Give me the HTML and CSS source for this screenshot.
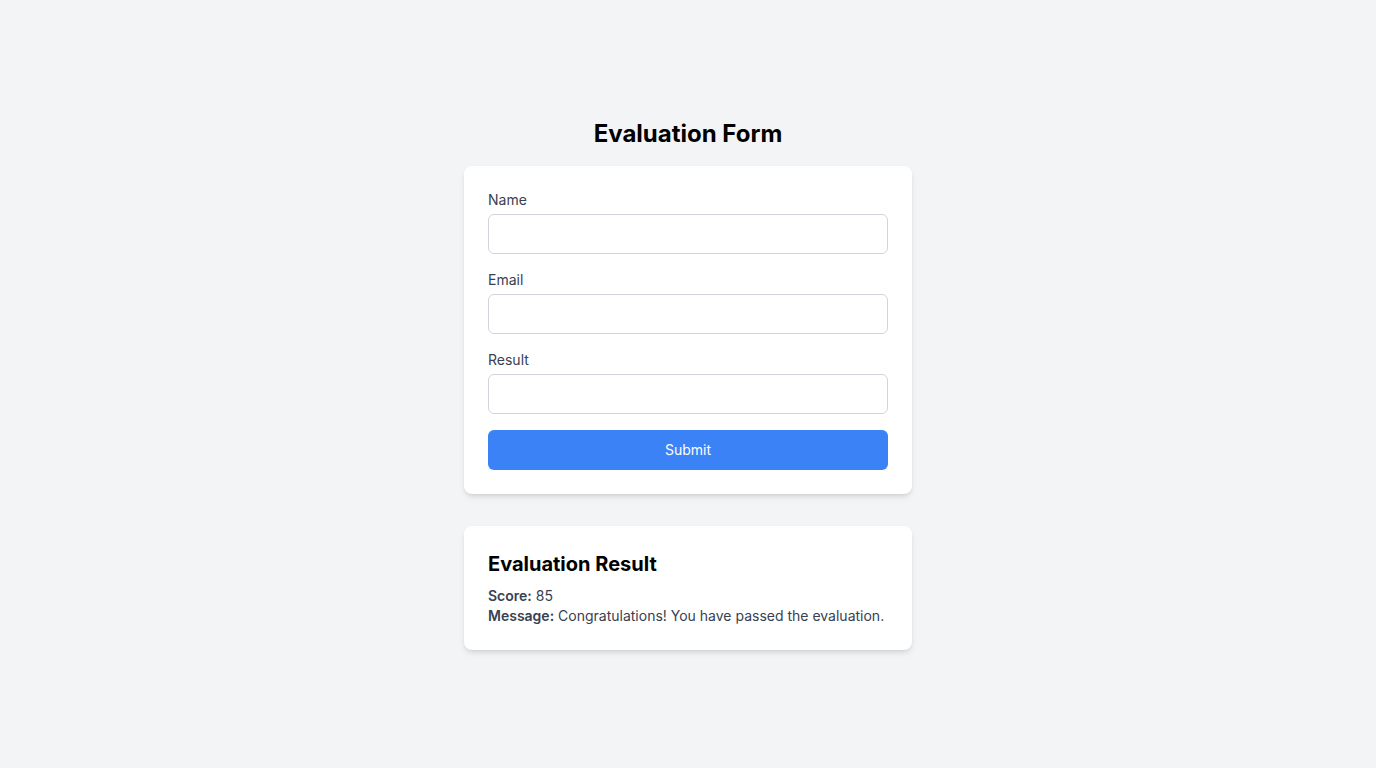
FILE: index.html
```html
<!DOCTYPE html>
<html lang="en">
<head>
<meta charset="utf-8">
<title>Evaluation Form</title>
<link rel="stylesheet" href="styles.css">
</head>
<body>
<main class="page">
  <div class="wrap">
    <h1 class="title">Evaluation Form</h1>
    <form class="card">
      <div class="field">
        <label class="label" for="name">Name</label>
        <input class="input" id="name" type="text">
      </div>
      <div class="field">
        <label class="label" for="email">Email</label>
        <input class="input" id="email" type="email">
      </div>
      <div class="field">
        <label class="label" for="result">Result</label>
        <input class="input" id="result" type="text">
      </div>
      <button class="btn" type="button">Submit</button>
    </form>
    <section class="card result">
      <h2 class="result-title">Evaluation Result</h2>
      <p class="line"><strong>Score:</strong> 85</p>
      <p class="line"><strong>Message:</strong> Congratulations! You have passed the evaluation.</p>
    </section>
  </div>
</main>
</body>
</html>
```
FILE: styles.css
```css
* { box-sizing: border-box; }
html, body { margin: 0; padding: 0; }
body {
  background: #f3f4f6;
  font-family: Inter, "Noto Sans", sans-serif;
  color: #374151;
}
.page {
  min-height: 100vh;
  display: flex;
  align-items: center;
  justify-content: center;
}
.wrap { width: 448px; }
.title {
  margin: 0 0 16px;
  font-size: 24px;
  line-height: 32px;
  font-weight: 700;
  text-align: center;
  color: #000;
}
.card {
  background: #fff;
  border-radius: 8px;
  padding: 24px;
  box-shadow: 0 4px 6px -1px rgba(0,0,0,0.1), 0 2px 4px -2px rgba(0,0,0,0.1);
}
.field { margin-bottom: 16px; }
.label {
  display: block;
  font-size: 14px;
  line-height: 20px;
  font-weight: 400;
  color: #374151;
  margin-bottom: 4px;
}
.input {
  display: block;
  width: 100%;
  height: 40px;
  border: 1px solid #d1d5db;
  border-radius: 6px;
  padding: 8px 12px;
  font: inherit;
  font-size: 14px;
  background: #fff;
  outline: none;
}
.btn {
  display: block;
  width: 100%;
  height: 40px;
  padding: 0;
  border: 0;
  border-radius: 6px;
  background: #3b82f6;
  color: #fff;
  font-family: inherit;
  font-size: 14px;
  line-height: 20px;
  font-weight: 400;
  cursor: pointer;
}
.result { margin-top: 32px; }
.result-title {
  margin: 0 0 8px;
  font-size: 20px;
  line-height: 28px;
  font-weight: 700;
  color: #000;
}
.line {
  margin: 0;
  font-size: 14px;
  line-height: 20px;
  color: #374151;
}
.line strong { font-weight: 600; }
```
